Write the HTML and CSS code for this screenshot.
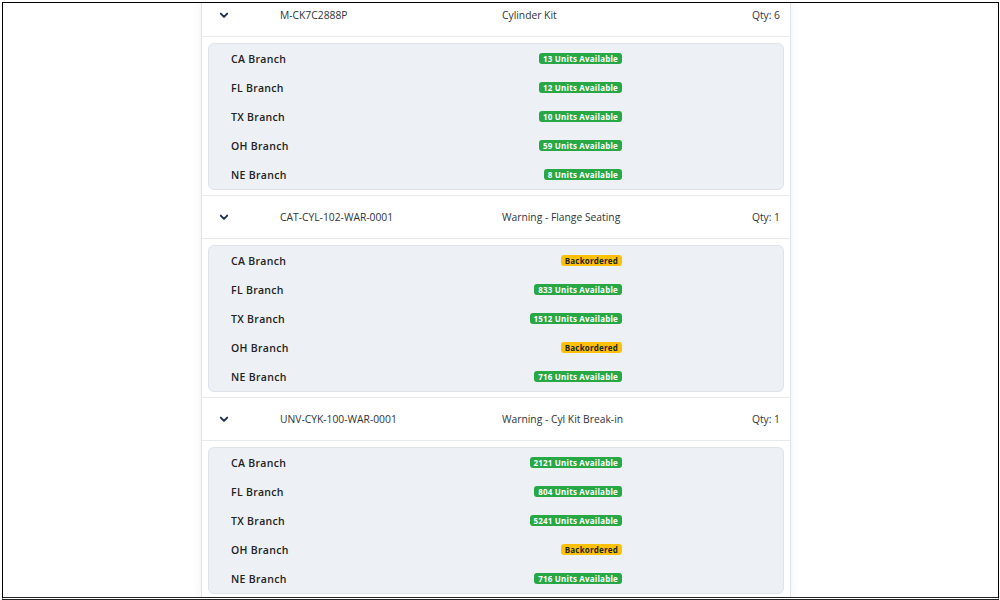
FILE: index.html
```html
<!DOCTYPE html>
<html>
<head>
<meta charset="utf-8">
<link rel="stylesheet" href="styles.css">
</head>
<body>
<div class="frame">
  <div class="container">
    <div class="item">
      <div class="item-header">
        <span class="chev"><svg width="10" height="7" viewBox="0 0 10 7"><polyline points="1.8,1.6 5,4.8 8.2,1.6" fill="none" stroke="#1c2c4a" stroke-width="1.9" stroke-linecap="round" stroke-linejoin="round"/></svg></span>
        <span class="part">M-CK7C2888P</span>
        <span class="desc">Cylinder Kit</span>
        <span class="qty">Qty: 6</span>
      </div>
      <div class="item-body">
        <div class="panel">
          <div class="row"><span class="branch">CA Branch</span><span class="badge ok">13 Units Available</span></div>
          <div class="row"><span class="branch">FL Branch</span><span class="badge ok">12 Units Available</span></div>
          <div class="row"><span class="branch">TX Branch</span><span class="badge ok">10 Units Available</span></div>
          <div class="row"><span class="branch">OH Branch</span><span class="badge ok">59 Units Available</span></div>
          <div class="row"><span class="branch">NE Branch</span><span class="badge ok">8 Units Available</span></div>
        </div>
      </div>
    </div>
    <div class="item">
      <div class="item-header">
        <span class="chev"><svg width="10" height="7" viewBox="0 0 10 7"><polyline points="1.8,1.6 5,4.8 8.2,1.6" fill="none" stroke="#1c2c4a" stroke-width="1.9" stroke-linecap="round" stroke-linejoin="round"/></svg></span>
        <span class="part">CAT-CYL-102-WAR-0001</span>
        <span class="desc">Warning - Flange Seating</span>
        <span class="qty">Qty: 1</span>
      </div>
      <div class="item-body">
        <div class="panel">
          <div class="row"><span class="branch">CA Branch</span><span class="badge back">Backordered</span></div>
          <div class="row"><span class="branch">FL Branch</span><span class="badge ok">833 Units Available</span></div>
          <div class="row"><span class="branch">TX Branch</span><span class="badge ok">1512 Units Available</span></div>
          <div class="row"><span class="branch">OH Branch</span><span class="badge back">Backordered</span></div>
          <div class="row"><span class="branch">NE Branch</span><span class="badge ok">716 Units Available</span></div>
        </div>
      </div>
    </div>
    <div class="item">
      <div class="item-header">
        <span class="chev"><svg width="10" height="7" viewBox="0 0 10 7"><polyline points="1.8,1.6 5,4.8 8.2,1.6" fill="none" stroke="#1c2c4a" stroke-width="1.9" stroke-linecap="round" stroke-linejoin="round"/></svg></span>
        <span class="part">UNV-CYK-100-WAR-0001</span>
        <span class="desc">Warning - Cyl Kit Break-in</span>
        <span class="qty">Qty: 1</span>
      </div>
      <div class="item-body">
        <div class="panel">
          <div class="row"><span class="branch">CA Branch</span><span class="badge ok">2121 Units Available</span></div>
          <div class="row"><span class="branch">FL Branch</span><span class="badge ok">804 Units Available</span></div>
          <div class="row"><span class="branch">TX Branch</span><span class="badge ok">5241 Units Available</span></div>
          <div class="row"><span class="branch">OH Branch</span><span class="badge back">Backordered</span></div>
          <div class="row"><span class="branch">NE Branch</span><span class="badge ok">716 Units Available</span></div>
        </div>
      </div>
    </div>
  </div>
</div>
</body>
</html>
```

FILE: styles.css
```css
html, body {
  margin: 0;
  padding: 0;
  background: #ffffff;
}
body {
  padding: 2px 1px 0 2px;
  font-family: "Open Sans", "Noto Sans", "Liberation Sans", sans-serif;
}
.frame {
  box-sizing: border-box;
  width: 997px;
  height: 598px;
  border: 1px solid #000;
  border-bottom: 3px double #222;
  overflow: hidden;
  background: #fff;
}
.container {
  margin: -10px 0 0 198px;
  width: 590px;
  box-sizing: border-box;
  border-left: 1px solid #dfe3e8;
  border-right: 1px solid #dfe3e8;
  box-shadow: 0 0 10px rgba(30, 50, 80, 0.07);
  background: #fff;
}
.item-header {
  display: flex;
  align-items: center;
  height: 42px;
  border-top: 1px solid #e6eaef;
  border-bottom: 1px solid #e6eaef;
  font-size: 10.3px;
  color: #2f3337;
  padding-right: 10px;
}
.chev {
  display: flex;
  width: 78px;
  padding-left: 17px;
  box-sizing: border-box;
}
.part {
  width: 222px;
}
.desc {
  flex: 1;
}
.qty {
  text-align: right;
}
.item-body {
  padding: 6px 6px 5px 6px;
}
.panel {
  background: #edf1f5;
  border: 1px solid #dde3e9;
  border-radius: 6px;
}
.row {
  display: flex;
  align-items: center;
  justify-content: space-between;
  height: 29px;
  width: 413px;
  padding-left: 22px;
  box-sizing: border-box;
}
.branch {
  font-size: 10.5px;
  font-weight: 600;
  color: #222;
  letter-spacing: 0.3px;
}
.badge {
  font-size: 8px;
  font-weight: 700;
  line-height: 11px;
  padding: 0 4px;
  border-radius: 3px;
  letter-spacing: 0.2px;
}
.badge.ok {
  background: #28a745;
  color: #fff;
}
.badge.back {
  background: #ffc107;
  color: #212529;
}
```
